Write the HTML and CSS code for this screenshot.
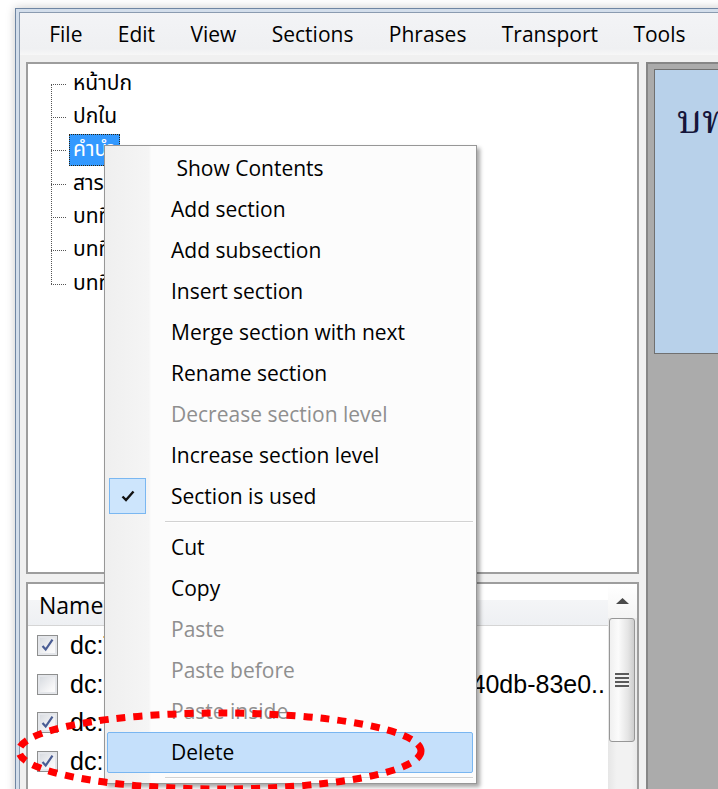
FILE: index.html
```html
<!DOCTYPE html>
<html lang="en">
<head>
<meta charset="utf-8">
<title>Book Editor</title>
<link rel="stylesheet" href="styles.css">
</head>
<body>
<div class="window">
  <div class="frame-inner">
    <nav class="menubar">
      <span class="menubar-item">File</span>
      <span class="menubar-item">Edit</span>
      <span class="menubar-item">View</span>
      <span class="menubar-item">Sections</span>
      <span class="menubar-item">Phrases</span>
      <span class="menubar-item">Transport</span>
      <span class="menubar-item">Tools</span>
    </nav>

    <div class="client">
      <div class="left-col">
        <div class="panel tree">
          <ul class="tree-list">
            <li><span class="node">หน้าปก</span></li>
            <li><span class="node">ปกใน</span></li>
            <li><span class="node selected">คำนำ</span></li>
            <li><span class="node">สารบัญ</span></li>
            <li><span class="node">บทที่ 1 บทนำ</span></li>
            <li><span class="node">บทที่ 2 เนื้อหา</span></li>
            <li><span class="node">บทที่ 3 สรุป</span></li>
          </ul>
        </div>

        <div class="panel list">
          <div class="list-main">
            <div class="list-header"><span>Name</span></div>
            <div class="row">
              <span class="checkbox checked"><svg viewBox="0 0 21 21"><path d="M5 11 L8.5 15 L16 4" /></svg></span>
              <span class="cell-name">dc:Title</span>
              <span class="cell-value">คำนำ</span>
            </div>
            <div class="row">
              <span class="checkbox"></span>
              <span class="cell-name">dc:Identifier</span>
              <span class="cell-value truncated">uuid:5c1e0f6a-2b7d-40db-83e0..</span>
            </div>
            <div class="row">
              <span class="checkbox checked"><svg viewBox="0 0 21 21"><path d="M5 11 L8.5 15 L16 4" /></svg></span>
              <span class="cell-name">dc:Creator</span>
              <span class="cell-value">ผู้แต่ง</span>
            </div>
            <div class="row">
              <span class="checkbox checked"><svg viewBox="0 0 21 21"><path d="M5 11 L8.5 15 L16 4" /></svg></span>
              <span class="cell-name">dc:Language</span>
              <span class="cell-value">th</span>
            </div>
            <div class="row">
              <span class="checkbox checked"><svg viewBox="0 0 21 21"><path d="M5 11 L8.5 15 L16 4" /></svg></span>
              <span class="cell-name">dc:Date</span>
              <span class="cell-value">2012</span>
            </div>
          </div>
          <div class="vscroll">
            <div class="vscroll-up"><svg viewBox="0 0 13 6"><polygon points="0,6 6.5,0 13,6" /></svg></div>
            <div class="vscroll-thumb"><span class="grip"></span></div>
          </div>
        </div>
      </div>

      <div class="preview">
        <div class="page"><span class="page-title">บทที่ 1</span></div>
      </div>
    </div>
  </div>
</div>

<ul class="context-menu">
  <li class="mi"><span class="mi-icon"></span><span class="mi-label">&nbsp;Show Contents</span></li>
  <li class="mi"><span class="mi-icon"></span><span class="mi-label">Add section</span></li>
  <li class="mi"><span class="mi-icon"></span><span class="mi-label">Add subsection</span></li>
  <li class="mi"><span class="mi-icon"></span><span class="mi-label">Insert section</span></li>
  <li class="mi"><span class="mi-icon"></span><span class="mi-label">Merge section with next</span></li>
  <li class="mi"><span class="mi-icon"></span><span class="mi-label">Rename section</span></li>
  <li class="mi disabled"><span class="mi-icon"></span><span class="mi-label">Decrease section level</span></li>
  <li class="mi"><span class="mi-icon"></span><span class="mi-label">Increase section level</span></li>
  <li class="mi"><span class="mi-icon checked"><svg viewBox="0 0 14 12"><path d="M1.5 6.5 L5 10 L12.5 1.5" /></svg></span><span class="mi-label">Section is used</span></li>
  <li class="mi-sep"></li>
  <li class="mi"><span class="mi-icon"></span><span class="mi-label">Cut</span></li>
  <li class="mi"><span class="mi-icon"></span><span class="mi-label">Copy</span></li>
  <li class="mi disabled"><span class="mi-icon"></span><span class="mi-label">Paste</span></li>
  <li class="mi disabled"><span class="mi-icon"></span><span class="mi-label">Paste before</span></li>
  <li class="mi disabled"><span class="mi-icon"></span><span class="mi-label">Paste inside</span></li>
  <li class="mi hot"><span class="mi-icon"></span><span class="mi-label">Delete</span></li>
  <li class="mi-sep"></li>
</ul>

<svg class="callout" viewBox="0 0 718 789" width="718" height="789">
  <ellipse cx="220" cy="751" rx="201" ry="38" />
</svg>
</body>
</html>
```

FILE: styles.css
```css
html, body {
  margin: 0;
  padding: 0;
}

body {
  width: 718px;
  height: 789px;
  overflow: hidden;
  position: relative;
  background: #ffffff;
  font-family: "Open Sans", "Noto Sans", sans-serif;
  color: #000;
}

/* ---- window frame ---- */
.window {
  margin: 8px 0 0 15px;
  width: 760px;
  height: 820px;
  box-sizing: border-box;
  border: 1px solid #6f86a3;
  padding: 3px 0 0 3px;
  background: #d3deeb;
  box-shadow: 0 0 9px rgba(0, 0, 0, 0.22);
}

.frame-inner {
  height: 100%;
  box-sizing: border-box;
  border-left: 1px solid #8a9bb0;
  border-top: 1px solid #8a9bb0;
  background: #f0f0f0;
  display: flex;
  flex-direction: column;
}

/* ---- menu bar ---- */
.menubar {
  flex: none;
  height: 42px;
  display: flex;
  align-items: center;
  padding-left: 11.5px;
  background: linear-gradient(#f3f4f6, #eff0f2 85%, #f7f7f7);
  font-size: 21px;
  white-space: nowrap;
  overflow: hidden;
}

.menubar-item {
  padding: 0 17.7px;
  line-height: 30px;
}

/* ---- client area ---- */
.client {
  flex: 1;
  display: flex;
  gap: 7px;
  padding: 7px 0 0 6px;
  min-height: 0;
}

.left-col {
  flex: none;
  width: 613px;
  display: flex;
  flex-direction: column;
  gap: 8px;
}

.panel {
  box-sizing: border-box;
  border: 2px solid #9d9d9d;
  background: #fff;
}

/* ---- section tree ---- */
.tree {
  height: 512px;
}

.tree-list {
  list-style: none;
  margin: 0;
  padding: 3px 0 0 0;
  position: relative;
  font-family: "Tahoma", "Noto Sans Thai", "Loma", "Garuda", "Waree", "Norasi", "DejaVu Sans", sans-serif;
  font-size: 21px;
}

.tree-list::before {
  content: "";
  position: absolute;
  left: 23px;
  top: 19.5px;
  height: 200px;
  border-left: 1px dotted #555;
}

.tree-list li {
  position: relative;
  height: 33.33px;
  display: flex;
  align-items: center;
  padding-left: 41px;
}

.tree-list li::before {
  content: "";
  position: absolute;
  left: 23px;
  top: 50%;
  width: 15px;
  border-top: 1px dotted #555;
}

.node {
  padding: 0 3px;
  height: 30px;
  line-height: 30px;
  border: 1px solid transparent;
  white-space: nowrap;
}

.node.selected {
  background: #3399ff;
  color: #fff;
  border: 1px dotted #2d2410;
}

/* ---- metadata list ---- */
.list {
  flex: 1;
  display: grid;
  grid-template-columns: 1fr 29px;
  overflow: hidden;
}

.list-main {
  min-width: 0;
}

.list-header {
  height: 41px;
  border-bottom: 1px solid #d5d5d5;
  background: linear-gradient(#ffffff 0, #ffffff 38%, #f4f5f7 40%, #eef0f3 100%);
  display: flex;
  align-items: center;
  padding-left: 11px;
  font-size: 23px;
}

.row {
  height: 37.5px;
  display: flex;
  align-items: center;
  padding: 1px 3px 0 9px;
  font-family: "Liberation Sans", Arial, sans-serif;
  font-size: 25px;
  white-space: nowrap;
}

.checkbox {
  flex: none;
  width: 21px;
  height: 21px;
  box-sizing: border-box;
  border: 1px solid #8e8f8f;
  background: linear-gradient(135deg, #d3d7dd, #f7f7f8 70%, #fdfdfd);
  box-shadow: inset 0 0 0 2px #e4e6ea;
  margin-right: 12px;
  display: flex;
}

.checkbox svg {
  width: 100%;
  height: 100%;
  fill: none;
  stroke: #4a5d94;
  stroke-width: 2.4;
}

.cell-name {
  width: 180px;
  flex: none;
  overflow: hidden;
}

.cell-value {
  flex: 1;
  min-width: 0;
  display: flex;
  overflow: hidden;
}

.cell-value.truncated {
  justify-content: flex-end;
}

/* ---- scroll bar ---- */
.vscroll {
  background: linear-gradient(to right, #e6e6e6, #f2f2f2 30%, #f2f2f2 80%, #e9e9e9);
  display: flex;
  flex-direction: column;
}

.vscroll-up {
  height: 34px;
  display: flex;
  align-items: center;
  justify-content: center;
  background: linear-gradient(#ffffff, #f4f4f4);
}

.vscroll-up svg {
  width: 13px;
  height: 6px;
  fill: #4a4a4a;
}

.vscroll-thumb {
  height: 124px;
  margin: 0 2px 0 1px;
  box-sizing: border-box;
  border: 1px solid #979797;
  border-radius: 3px;
  background: linear-gradient(to right, #f0f0f0, #fbfbfb 35%, #e4e4e4 75%, #cdcdcd);
  display: flex;
  align-items: center;
  justify-content: center;
}

.grip {
  width: 14px;
  height: 15px;
  background: repeating-linear-gradient(#5a5a5a 0 2px, #f2f2f2 2px 4px);
}

/* ---- page preview ---- */
.preview {
  flex: 1;
  min-width: 0;
  background: #ababab;
  border-left: 2px solid #868686;
  border-top: 2px solid #868686;
  padding: 5px 0 0 6px;
}

.page {
  height: 285px;
  box-sizing: border-box;
  border: 1px solid #707070;
  border-right: none;
  background: #b8d1ea;
  padding: 20px 0 0 22px;
  white-space: nowrap;
  overflow: hidden;
}

.page-title {
  font-family: "Norasi", "Tahoma", "Noto Serif Thai", "Liberation Serif", serif;
  font-size: 40px;
  color: #15153a;
}

/* ---- context menu (floats over the window) ---- */
.context-menu {
  position: absolute;
  left: 104px;
  top: 145px;
  width: 373px;
  margin: 0;
  padding: 1.5px 3px 0 2px;
  list-style: none;
  box-sizing: border-box;
  border: 1px solid #979797;
  background: linear-gradient(to right, #efefef 0, #f5f5f5 44px, #fcfcfc 46px, #fcfcfc 100%);
  box-shadow: 3px 3px 4px rgba(0, 0, 0, 0.35);
  font-size: 21px;
  white-space: nowrap;
}

.mi {
  height: 41px;
  box-sizing: border-box;
  border: 1px solid transparent;
  border-radius: 2px;
  display: flex;
  align-items: center;
  padding-left: 1px;
}

.mi-icon {
  width: 37px;
  height: 36px;
  margin-right: 25px;
  box-sizing: border-box;
  display: flex;
  align-items: center;
  justify-content: center;
}

.mi-icon.checked {
  background: #cde5fc;
  border: 1.5px solid #7ab7f1;
}

.mi-icon svg {
  width: 14px;
  height: 12px;
  fill: none;
  stroke: #111;
  stroke-width: 2.4;
}

.mi.disabled {
  color: #8f8f8f;
}

.mi.hot {
  background: #c5e0fb;
  border-color: #79b6f1;
}

.mi-sep {
  height: 10px;
  margin-left: 58px;
  display: flex;
  align-items: center;
}

.mi-sep::before {
  content: "";
  flex: 1;
  border-top: 1px solid #d2d2d2;
  border-bottom: 1px solid #ffffff;
}

/* ---- red callout ring ---- */
.callout {
  position: absolute;
  left: 0;
  top: 0;
  pointer-events: none;
}

.callout ellipse {
  fill: none;
  stroke: #ff0000;
  stroke-width: 7;
  stroke-dasharray: 9 8;
}
```
